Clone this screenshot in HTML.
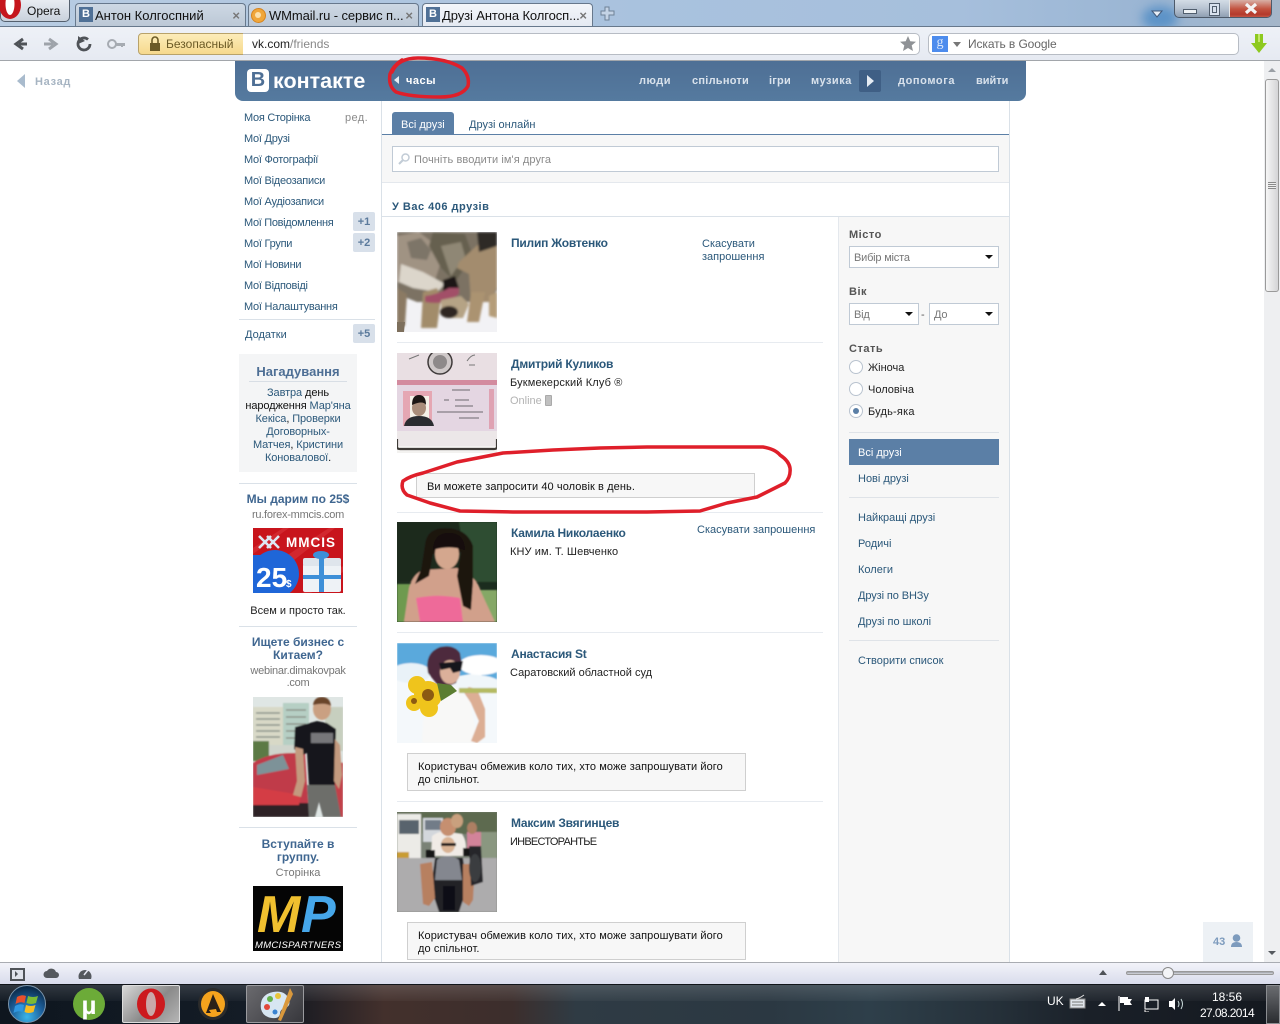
<!DOCTYPE html>
<html lang="uk"><head><meta charset="utf-8"><title>Друзі Антона Колгоспного</title>
<style>
html,body{margin:0;padding:0;width:1280px;height:1024px;overflow:hidden;background:#fff}
body{position:relative;font-family:"Liberation Sans","DejaVu Sans",sans-serif;font-size:11px;color:#000}
.t{position:absolute;white-space:nowrap;line-height:14px;margin-top:1px}
.b{position:absolute}
.l{color:#2b587a}
.m{letter-spacing:-.25px}
.bd{font-weight:bold}
.c{text-align:center}
.ad{color:#777;letter-spacing:-.25px}
.n{font-weight:bold;color:#2b587a;font-size:12px;margin-top:0;letter-spacing:-.22px}
.nav{font-weight:bold;color:#d9e2ec;font-size:11px;top:73px;letter-spacing:.5px}
.badge{position:absolute;left:353px;width:22px;height:19px;background:#d8e0ea;border-radius:2px;color:#5b7a9c;font-weight:bold;text-align:center;line-height:20px;font-size:11px}
.sep{position:absolute;height:1px;background:#e7ebf0}
.msg{position:absolute;background:#f7f7f7;border:1px solid #cfcfcf;box-sizing:border-box;padding:7px 10px 0;line-height:13px;color:#111;letter-spacing:.09px}
.tab{position:absolute;top:3px;height:23px;width:171px;border-radius:4px 4px 0 0;border:1px solid #67788c;border-bottom:0;box-sizing:border-box;font-size:13px;line-height:23px;color:#111;white-space:nowrap;overflow:hidden}
.vk{position:absolute;left:3px;top:3px;width:14px;height:15px;background:#4f7096;color:#fff;font-weight:bold;font-size:11px;text-align:center;line-height:15px}
.x{position:absolute;right:5px;top:0;color:#777;font-size:13px;font-weight:bold;background:inherit}
.sel{position:absolute;background:#fff;border:1px solid #c0cad5;box-sizing:border-box;height:22px;color:#777;line-height:23px;padding-left:4px;letter-spacing:-.2px}
.sel i{position:absolute;right:5px;top:8px;width:0;height:0;border:4px solid transparent;border-top:4px solid #111;border-bottom:0}
.rad{position:absolute;left:849px;width:12px;height:12px;border:1px solid #b9c3cf;border-radius:50%;background:#fff}
.h{letter-spacing:.5px}
</style></head><body>

<!-- title/tab bar -->
<div class="b" style="left:0;top:0;width:1280px;height:27px;background:linear-gradient(90deg,#b8cce2 0,#a9c2de 50%,#a6bfdc 75%,#9ab5d3 90%,#a5b6c9 100%)"></div>
<div class="b" style="left:1142px;top:6px;width:36px;height:24px;background:#5d93c7;border-radius:50%;filter:blur(5px)"></div>
<div class="b" style="left:0;top:26px;width:1280px;height:1px;background:#67788c"></div>
<div class="b" style="left:0;top:0;width:70px;height:22px;background:linear-gradient(#e8ecf2,#c9d1dc);border:1px solid #55606e;border-top:0;border-radius:0 0 5px 5px;box-sizing:border-box"></div>
<svg class="b" style="left:0;top:0" width="24" height="21"><ellipse cx="10" cy="5" rx="11" ry="14" fill="#c5161d"/><ellipse cx="10" cy="4" rx="4.5" ry="11" fill="#fff"/></svg>
<div class="t" style="left:27px;top:3px;font-size:12px;color:#111">Opera</div>
<div class="tab" style="left:75px;background:linear-gradient(#cdd8e4,#bcc8d6)"><span class="vk">В</span><span style="margin-left:19px">Антон Колгоспний</span><span class="x">×</span></div>
<div class="tab" style="left:248px;background:linear-gradient(#cdd8e4,#bcc8d6)"><svg class="b" style="left:2px;top:4px" width="15" height="15"><circle cx="7.5" cy="7.5" r="7" fill="#f0a63a" stroke="#d5831e"/><circle cx="7" cy="7" r="3" fill="#fbe0ac"/></svg><span style="margin-left:20px;letter-spacing:-.1px">WMmail.ru - сервис п...</span><span class="x">×</span></div>
<div class="tab" style="left:422px;background:linear-gradient(#f3f6fa,#e4e9f2)"><span class="vk">В</span><span style="margin-left:19px;letter-spacing:-.1px">Друзі Антона Колгосп...</span><span class="x">×</span></div>
<svg class="b" style="left:600px;top:6px" width="15" height="15"><path d="M5 1h4v4h5v4H9v5H5V9H1V5h4z" fill="#c4d3e5" stroke="#6f8297"/></svg>
<svg class="b" style="left:1150px;top:9px" width="14" height="10"><path d="M2 2h10L7 8z" fill="#e7eef6" stroke="#41597a"/></svg>
<!-- window controls -->
<div class="b" style="left:1174px;top:0;width:98px;height:18px;border:1px solid #4d5a6a;border-top:0;border-radius:0 0 5px 5px;box-sizing:border-box;background:linear-gradient(#d3dce6,#b4c0cf 55%,#8f9fb2);overflow:hidden">
<div class="b" style="left:54px;top:0;width:44px;height:18px;background:linear-gradient(#d8b0a6,#c2523f 50%,#b43a2c 80%,#c9604e);border-left:1px solid #e6e6e6;box-sizing:border-box"></div></div>
<div class="b" style="left:1183px;top:9px;width:12px;height:3px;background:#eef2f6;border:1px solid #505e6e"></div>
<div class="b" style="left:1209px;top:3px;width:9px;height:11px;background:#d8e2ee;border:1px solid #505e6e"></div>
<div class="b" style="left:1212px;top:6px;width:3px;height:5px;border:1px solid #505e6e"></div>
<div class="b" style="left:1251px;top:0;width:0;height:0"></div>
<svg class="b" style="left:1244px;top:3px" width="14" height="11"><path d="M2 1l10 9M12 1L2 10" stroke="#f4f4f4" stroke-width="3.200"/></svg>

<!-- toolbar -->
<div class="b" style="left:0;top:27px;width:1280px;height:33px;background:linear-gradient(#eef1f7,#e6eaf2)"></div>
<div class="b" style="left:0;top:60px;width:1280px;height:1px;background:#a2a6ab"></div>
<svg class="b" style="left:12px;top:35px" width="120" height="18">
<path d="M15 9H7M11 4L4 9l7 5" fill="none" stroke="#4f5358" stroke-width="3"/>
<path d="M32 9h9M37 4l7 5-7 5" fill="none" stroke="#9ea3aa" stroke-width="3"/>
<path d="M76 4.500A6 6 0 1 0 78 9" fill="none" stroke="#4f5358" stroke-width="2.800"/><path d="M66 1v8l7-3z" fill="#4f5358"/>
<circle cx="100" cy="9" r="4" fill="none" stroke="#a6abb2" stroke-width="2"/><path d="M104 8h9v3h-2v1h-2v-1h-5z" fill="#a6abb2"/>
</svg>
<div class="b" style="left:138px;top:33px;width:106px;height:22px;background:linear-gradient(#fcecb9,#f6d98d);border:1px solid #b8a26a;border-radius:4px 0 0 4px;box-sizing:border-box"></div>
<svg class="b" style="left:148px;top:36px" width="14" height="16"><rect x="2" y="7" width="10" height="8" fill="#6b5a26"/><path d="M4 7V4a3 3 0 0 1 6 0v3" fill="none" stroke="#6b5a26" stroke-width="1.6"/></svg>
<div class="t" style="left:166px;top:36px;font-size:12px;color:#6b5a26">Безопасный</div>
<div class="b" style="left:243px;top:33px;width:677px;height:22px;background:#fff;border:1px solid #b7bcc4;border-left:0;border-radius:0 5px 5px 0;box-sizing:border-box"></div>
<div class="t" style="left:252px;top:36px;font-size:12px;color:#222">vk.com<span style="color:#888">/friends</span></div>
<svg class="b" style="left:900px;top:36px" width="16" height="15"><path d="M8 0l2.3 5.2 5.7.5-4.3 3.7 1.3 5.6L8 12l-5 3 1.3-5.6L0 5.7l5.700-.5z" fill="#8f9296"/></svg>
<div class="b" style="left:928px;top:33px;width:311px;height:22px;background:#fff;border:1px solid #b7bcc4;border-radius:5px;box-sizing:border-box"></div>
<div class="b" style="left:932px;top:36px;width:16px;height:16px;background:#4d8ced;color:#dbe8fb;font:14px/14px 'Liberation Serif',serif;text-align:center">g</div>
<div class="b" style="left:953px;top:42px;width:0;height:0;border:4px solid transparent;border-top:5px solid #777;border-bottom:0"></div>
<div class="t" style="left:968px;top:36px;font-size:12px;color:#666;letter-spacing:-.1px">Искать в Google</div>
<svg class="b" style="left:1250px;top:33px" width="18" height="21"><path d="M5 1h8v9h4L9 20 1 10h4z" fill="#8dc91f"/><path d="M8 1h2v8H8z" fill="#c3e76a"/></svg>

<!-- VK page -->
<div class="b" style="left:235px;top:61px;width:791px;height:40px;background:linear-gradient(#4e6f95,#557a9f);border-radius:0 0 8px 8px"></div>
<div class="b" style="left:247px;top:69px;width:22px;height:23px;background:#fff;border-radius:4px;color:#4e6f95;font-weight:bold;font-size:20px;line-height:23px;text-align:center">В</div>
<div class="t" style="left:273px;top:70px;color:#fff;font-weight:bold;font-size:21.500px;line-height:20px">контакте</div>
<div class="b" style="left:394px;top:76px;width:0;height:0;border:4px solid transparent;border-right:5px solid #e6ecf3;border-left:0"></div>
<div class="t nav" style="left:406px;color:#fff">часы</div>
<div class="t nav" style="left:639px">люди</div>
<div class="t nav" style="left:692px;letter-spacing:.25px">спільноти</div>
<div class="t nav" style="left:769px;letter-spacing:.2px">ігри</div>
<div class="t nav" style="left:811px">музика</div>
<div class="b" style="left:859px;top:70px;width:22px;height:22px;background:#3f5f85;border-radius:2px"></div>
<div class="b" style="left:867px;top:75px;width:0;height:0;border:6px solid transparent;border-left:7px solid #e6ecf3;border-right:0"></div>
<div class="t nav" style="left:898px;letter-spacing:.6px">допомога</div>
<div class="t nav" style="left:976px;letter-spacing:0">вийти</div>

<!-- back -->
<div class="b" style="left:17px;top:74px;width:0;height:0;border:7px solid transparent;border-right:8px solid #a9bbcd;border-left:0"></div>
<div class="t bd" style="left:35px;top:74px;color:#a6b4c2;letter-spacing:.7px">Назад</div>

<!-- structural columns -->
<div class="b" style="left:381px;top:101px;width:1px;height:862px;background:#dae1e8"></div>
<div class="b" style="left:838px;top:217px;width:171px;height:746px;background:#f7f7f7;border-left:1px solid #e4e8ed;box-sizing:border-box"></div>
<div class="b" style="left:1009px;top:101px;width:1px;height:862px;background:#dae1e8"></div>

<!-- left menu -->
<div class="t l m" style="left:244px;top:110px">Моя Сторінка</div><div class="t" style="left:345px;top:110px;color:#8a8a8a;letter-spacing:.4px">ред.</div>
<div class="t l m" style="left:244px;top:131px">Мої Друзі</div>
<div class="t l m" style="left:244px;top:152px">Мої Фотографії</div>
<div class="t l m" style="left:244px;top:173px">Мої Відеозаписи</div>
<div class="t l m" style="left:244px;top:194px">Мої Аудіозаписи</div>
<div class="t l m" style="left:244px;top:215px;letter-spacing:-.32px">Мої Повідомлення</div><div class="badge" style="top:212px">+1</div>
<div class="t l m" style="left:244px;top:236px">Мої Групи</div><div class="badge" style="top:233px">+2</div>
<div class="t l m" style="left:244px;top:257px">Мої Новини</div>
<div class="t l m" style="left:244px;top:278px">Мої Відповіді</div>
<div class="t l m" style="left:244px;top:299px">Мої Налаштування</div>
<div class="sep" style="left:239px;top:319px;width:136px;background:#dae1e8"></div>
<div class="t l" style="left:245px;top:327px">Додатки</div><div class="badge" style="top:324px">+5</div>

<!-- reminder -->
<div class="b" style="left:239px;top:354px;width:118px;height:118px;background:#f4f5f6"></div>
<div class="t bd c" style="left:239px;width:118px;top:364px;font-size:13px;color:#4e6f95">Нагадування</div>
<div class="b" style="left:249px;top:381px;width:98px;height:1px;background:#d8dee5"></div>
<div class="b c" style="left:239px;width:118px;top:387px;line-height:13px;color:#111;letter-spacing:-.1px"><span class="l">Завтра</span> день<br>народження <span class="l">Мар'яна</span><br><span class="l">Кекіса</span>, <span class="l">Проверки</span><br><span class="l">Договорных-</span><br><span class="l">Матчея</span>, <span class="l">Кристини</span><br><span class="l">Коноваловoї</span>.</div>

<!-- ads -->
<div class="sep" style="left:239px;top:483px;width:118px;background:#dae1e8"></div>
<div class="t bd c" style="left:239px;width:118px;top:491px;color:#3f6690;font-size:12px">Мы дарим по 25$</div>
<div class="t c ad" style="left:239px;width:118px;top:507px">ru.forex-mmcis.com</div>
<svg class="b" style="left:253px;top:528px" width="90" height="65">
<rect width="90" height="65" fill="#c8141c"/><path d="M0 20L30 0h6L0 26zM30 30L76 0h6L36 36zM50 65L90 38v6L58 65z" fill="#d9333a" opacity=".6"/>
<path d="M6 8l12 12M18 8L6 20M14 8l12 12M26 8L14 20" stroke="#dde7f3" stroke-width="2.600"/>
<text x="33" y="19" font-family="Liberation Sans" font-weight="bold" font-size="13.500" fill="#fff" letter-spacing="1">MMCIS</text>
<circle cx="22" cy="46" r="24" fill="#1f66d8"/><rect x="0" y="27" width="30" height="38" fill="#1f66d8"/>
<text x="3" y="59" font-family="Liberation Sans" font-weight="bold" font-size="28" fill="#fff">25</text>
<text x="33" y="59" font-family="Liberation Sans" font-weight="bold" font-size="10" fill="#fff">$</text>
<rect x="50" y="36" width="38" height="28" rx="2" fill="#eef2f6"/><rect x="50" y="30" width="38" height="8" rx="2" fill="#dfe5ec"/><rect x="66" y="30" width="5" height="34" fill="#3d8fd8"/><rect x="50" y="47" width="38" height="4" fill="#3d8fd8"/><ellipse cx="68" cy="27" rx="8" ry="4" fill="#3d8fd8"/>
</svg>
<div class="t c" style="left:239px;width:118px;top:603px;color:#222">Всем и просто так.</div>
<div class="sep" style="left:239px;top:626px;width:118px;background:#dae1e8"></div>
<div class="b bd c" style="left:239px;width:118px;top:636px;line-height:13px;color:#3f6690;font-size:12px">Ищете бизнес с<br>Китаем?</div>
<div class="b c ad" style="left:239px;width:118px;top:665px;line-height:12px">webinar.dimakovpak<br>.com</div>
<svg class="b" style="left:253px;top:697px" width="90" height="120"><defs><filter id="f1"><feGaussianBlur stdDeviation=".7"/></filter></defs>
<rect width="90" height="120" fill="#dfe6e4"/><g filter="url(#f1)"><rect x="0" y="10" width="30" height="40" fill="#d8d9c7"/><rect x="30" y="6" width="26" height="42" fill="#b6cfc4"/><rect x="72" y="10" width="18" height="44" fill="#c7cfbf"/>
<path d="M3 16h24M3 22h24M3 28h24M3 34h24M3 40h24M33 13h20M33 20h20M33 27h20M33 34h20M33 41h20" stroke="#8c938a" stroke-width="1.500"/>
<rect x="0" y="44" width="16" height="20" fill="#5b7a45"/><rect x="16" y="48" width="36" height="10" fill="#cfd4cc"/>
<path d="M0 66q14-10 40-10l12 0 4 64H0z" fill="#c03b48"/><path d="M4 68l26-10 6 14-32 6z" fill="#7d9298"/><rect x="0" y="106" width="56" height="14" fill="#2d2326"/><path d="M0 90l48 8-2 10H0z" fill="#d43c44"/>
<path d="M82 64l8 2v54H82z" fill="#c2404a"/>
<ellipse cx="69" cy="12" rx="9" ry="11" fill="#caa082"/><path d="M60 8q1-8 9-8t9 9q-6-4-18-1z" fill="#6b452c"/>
<path d="M42 30l22-6 10 2 9 6-1 32 0 26H56l-2-34-4 2-9-6z" fill="#17171a"/><path d="M58 36h22v10H58z" fill="#77777a"/>
<path d="M54 88h28l6 32H70l-4-15-4 15H56z" fill="#6d6e6b"/><path d="M42 50l8 2 2 32-4 16-8-2 4-14z" fill="#c39a7f"/><path d="M82 42l5 6 2 30-3 14-5-8z" fill="#c39a7f"/></g></svg>
<div class="sep" style="left:239px;top:827px;width:118px;background:#dae1e8"></div>
<div class="b bd c" style="left:239px;width:118px;top:838px;line-height:13px;color:#3f6690;font-size:12px">Вступайте в<br>группу.</div>
<div class="t c ad" style="left:239px;width:118px;top:865px;letter-spacing:0">Сторінка</div>
<svg class="b" style="left:253px;top:886px" width="90" height="65"><rect width="90" height="65" fill="#050505"/>
<text x="4" y="46" font-family="Liberation Sans" font-weight="bold" font-style="italic" font-size="52" fill="#f0c02f" textLength="50">M</text>
<text x="48" y="46" font-family="Liberation Sans" font-weight="bold" font-style="italic" font-size="52" fill="#46a7ea">P</text>
<text x="2" y="62" font-family="Liberation Sans" font-style="italic" font-size="9.500" fill="#fff" textLength="86">MMCISPARTNERS</text></svg>

<!-- tabs -->
<div class="b" style="left:392px;top:112px;width:62px;height:22px;background:#5b7fa6;border-radius:3px 3px 0 0"></div>
<div class="t" style="left:401px;top:117px;color:#fff">Всі друзі</div>
<div class="t l" style="left:469px;top:117px">Друзі онлайн</div>
<div class="b" style="left:382px;top:134px;width:627px;height:1px;background:#5b7fa6"></div>
<div class="b" style="left:382px;top:135px;width:627px;height:47px;background:#f7f7f7;border-bottom:1px solid #e4e8ed"></div>
<div class="b" style="left:392px;top:146px;width:607px;height:26px;background:#fff;border:1px solid #c0cad5;box-sizing:border-box"></div>
<svg class="b" style="left:398px;top:153px" width="12" height="12"><circle cx="7.500" cy="4.500" r="3.500" fill="none" stroke="#c2ccd6" stroke-width="1.500"/><path d="M5 7L1 11" stroke="#c2ccd6" stroke-width="2"/></svg>
<div class="t" style="left:414px;top:152px;color:#8a8a8a;letter-spacing:.08px">Почніть вводити ім'я друга</div>
<div class="t bd l h" style="left:392px;top:199px">У Вас 406 друзів</div>
<div class="b" style="left:382px;top:216px;width:627px;height:1px;background:#dae1e8"></div>

<!-- photo 1 wolves -->
<svg class="b" style="left:397px;top:232px" width="100" height="100"><defs><filter id="f2"><feGaussianBlur stdDeviation="1"/></filter></defs>
<rect width="100" height="100" fill="#f2f2f5"/><g filter="url(#f2)">
<path d="M0 0h100v58L92 70H20L0 62z" fill="#7b7264"/>
<path d="M0 4l22-4 18 14 4 16-6 18-18 6-20-4z" fill="#a09383"/>
<path d="M4 32l22 8 22 12-8 8-24-4-14-6z" fill="#dcd6cb"/>
<path d="M10 10l14-4 10 12-4 10-16-2z" fill="#7d7467"/>
<path d="M36 0l32 2 8 22-18 26-14-14-12-22z" fill="#66604f"/><path d="M44 14l20-4 4 14-14 20z" fill="#8f8775"/>
<path d="M62 30l24-22 14-4v52l-8 14-18 0-2-28-12-6z" fill="#a38c6e"/>
<path d="M80 0h20v14L82 20z" fill="#2d2a26"/>
<path d="M26 60l14-4 4 10-4 30H24z" fill="#a28c6a"/><path d="M0 56l10 6-2 32H0z" fill="#8b7a64"/>
<path d="M74 60l14 0-6 30-12 0z" fill="#ab9371"/><path d="M92 64l8-4v26l-8-2z" fill="#b59d79"/>
<path d="M46 48l12-4 4 12-16 6z" fill="#1c1815"/>
<path d="M28 64q14-2 24-8l10 0 0 6q-14 12-34 8z" fill="#a24f68"/>
<path d="M44 68l20-4 8 8-6 14-16 0-6-8z" fill="#b5a385"/>
<ellipse cx="52" cy="80" rx="9" ry="6" fill="#2f2721"/>
</g><path d="M0 90h8l-1 10H0z" fill="#7d6f5c"/></svg>
<div class="t n" style="left:511px;top:236px">Пилип Жовтенко</div>
<div class="b l" style="left:702px;top:238px;line-height:13px">Скасувати<br>запрошення</div>
<div class="sep" style="left:397px;top:342px;width:426px"></div>

<!-- photo 2 passport -->
<svg class="b" style="left:397px;top:353px" width="100" height="100"><rect width="100" height="100" fill="#e9e1e6"/>
<rect y="0" width="100" height="28" fill="#e9dfe3"/>
<circle cx="43" cy="9" r="12" fill="#cfc9c9" stroke="#3f3a3a" stroke-width="1.500"/><circle cx="43" cy="9" r="7" fill="#8e8a8a"/>
<path d="M12 6l10-4M70 8q4-6 8-6M72 12h6" stroke="#777" fill="none"/>
<rect x="0" y="27" width="100" height="5" fill="#d38b9f"/>
<rect y="32" width="100" height="46" fill="#e4d6e2"/>
<rect x="6" y="38" width="29" height="35" fill="#e5a7b3"/><rect x="13" y="43" width="19" height="29" fill="#f5f1e7"/>
<ellipse cx="22" cy="55" rx="7" ry="8" fill="#a98d7a"/><path d="M15 52q0-10 7-10t7 10q-3-5-14 0z" fill="#1c1714"/><path d="M7 73q2-10 15-10t15 10z" fill="#2a2c30"/>
<path d="M55 37h18M47 47h5M58 47h14M58 53h18M40 59h46M62 65h20" stroke="#6c686e" stroke-width="1"/>
<rect x="92" y="36" width="5" height="40" fill="#dfa2b3"/>
<rect y="78" width="100" height="15" fill="#ece7e8"/>
<rect x="0" y="93" width="100" height="7" fill="#f3f2f0"/><path d="M0 86v8q0 2 3 2h94q3 0 3-2v-8" fill="none" stroke="#3d3a36" stroke-width="2.200"/></svg>
<div class="t n" style="left:511px;top:357px">Дмитрий Куликов</div>
<div class="t" style="left:510px;top:375px;color:#222;letter-spacing:.15px">Букмекерский Клуб ®</div>
<div class="t" style="left:510px;top:393px;color:#b3b3b3">Online</div>
<div class="b" style="left:545px;top:395px;width:5px;height:9px;background:#c0c0c0;border:1px solid #aaa;border-radius:1px"></div>
<div class="msg" style="left:416px;top:473px;width:339px;height:25px;line-height:12px">Ви можете запросити 40 чоловік в день.</div>
<div class="sep" style="left:397px;top:512px;width:426px"></div>

<!-- photo 3 girl -->
<svg class="b" style="left:397px;top:522px" width="100" height="100"><defs><filter id="f3"><feGaussianBlur stdDeviation=".9"/></filter></defs>
<rect width="100" height="100" fill="#1b2c1e"/><g filter="url(#f3)">
<rect y="0" width="100" height="60" fill="#1b2c1e"/><path d="M62 0h38v60H72z" fill="#2f4d33"/>
<path d="M0 62h20v38H0z" fill="#6e9a50"/><path d="M76 68h24v32H82z" fill="#85a866"/>
<path d="M7 100l5-34q4-14 14-18l34-2q20 8 24 24l14 30z" fill="#d1a08b"/>
<path d="M28 22q2-16 20-16 22 0 28 18l0 36-2 28-8-4-6-30 4-24-28 2-4 22-14 8q2-6 6-14z" fill="#1a1211"/>
<ellipse cx="50" cy="32" rx="12" ry="15" fill="#d4a78e"/>
<path d="M36 28q1-17 16-17t16 17q-16-5-32 0z" fill="#151010"/>
<path d="M19 76q16-3 28-2t16 2l3 24H23z" fill="#ee6b99"/></g></svg>
<div class="t n" style="left:511px;top:526px">Камила Николаенко</div>
<div class="t l" style="left:697px;top:522px">Скасувати запрошення</div>
<div class="t" style="left:510px;top:544px;color:#222;letter-spacing:.1px">КНУ им. Т. Шевченко</div>
<div class="sep" style="left:397px;top:632px;width:426px"></div>

<!-- photo 4 -->
<svg class="b" style="left:397px;top:643px" width="100" height="100"><defs><filter id="f4"><feGaussianBlur stdDeviation=".9"/></filter></defs>
<rect width="100" height="100" fill="#f4f8fb"/><g filter="url(#f4)">
<path d="M0 0h100v40L80 30 50 35 20 24 0 34z" fill="#5aa9dc"/><ellipse cx="84" cy="22" rx="22" ry="10" fill="#fff"/><ellipse cx="14" cy="30" rx="20" ry="10" fill="#e9f2f8"/><ellipse cx="78" cy="42" rx="26" ry="10" fill="#f0f6fa"/>
<path d="M25 100l2-44 32-12 14 14 8 42z" fill="#f8f8f7"/>
<path d="M66 48l6-4 8 2 8 20 0 28-8 6-6-2 8-20-8-18z" fill="#dcae94"/>
<path d="M62 45h38v5H62z" fill="#b4ba62"/>
<path d="M31 30q-4-20 12-26 14-3 20 6l2 12-6 18-14 6-6-6z" fill="#4e2c3e"/>
<ellipse cx="53" cy="29" rx="10" ry="12" fill="#dcb09a"/>
<path d="M42 20l24-2-2 10-8 2-3-5-9 2z" fill="#15151b"/></g>
<g fill="#efc41c"><circle cx="31" cy="52" r="14"/><circle cx="20" cy="42" r="9"/><circle cx="32" cy="65" r="9"/><circle cx="17" cy="60" r="8"/></g><circle cx="31" cy="52" r="6" fill="#8c5a12"/><circle cx="17" cy="58" r="3" fill="#8c5a12"/><path d="M40 40l14 2 6 6-16 10z" fill="#5b7d32"/></svg>
<div class="t n" style="left:511px;top:647px">Анастасия St</div>
<div class="t" style="left:510px;top:665px;color:#222">Саратовский областной суд</div>
<div class="msg" style="left:407px;top:753px;width:339px;height:38px">Користувач обмежив коло тих, хто може запрошувати його<br>до спільнот.</div>
<div class="sep" style="left:397px;top:801px;width:426px"></div>

<!-- photo 5 -->
<svg class="b" style="left:397px;top:812px" width="100" height="100"><defs><filter id="f5"><feGaussianBlur stdDeviation=".7"/></filter></defs>
<rect width="100" height="100" fill="#7a8276"/><g filter="url(#f5)">
<rect y="0" width="100" height="22" fill="#5d6a50"/><rect y="46" width="100" height="54" fill="#adacad"/><rect x="82" y="20" width="18" height="26" fill="#8a9780"/>
<rect x="0" y="2" width="24" height="44" fill="#ecebe7"/><rect x="2" y="8" width="20" height="14" fill="#59646d"/><rect x="0" y="40" width="12" height="6" fill="#c99c31"/>
<rect x="26" y="6" width="20" height="24" fill="#d3d7dc"/><rect x="28" y="8" width="16" height="10" fill="#727c88"/>
<path d="M35 24q8-6 16-4l14 2q6 8 3 22H34z" fill="#f0ebe6"/>
<ellipse cx="51" cy="15" rx="8" ry="9" fill="#c68f70"/><ellipse cx="60" cy="9" rx="6" ry="7" fill="#c9a07e"/><ellipse cx="51" cy="33" rx="7" ry="8" fill="#d9b394"/><rect x="44" y="31" width="15" height="3" fill="#171717"/>
<path d="M38 46l28 0 4 30-8 24-20 0-8-24z" fill="#232327"/><path d="M40 48q10-8 22 0l3 20H38z" fill="#84878f"/><path d="M46 74h12v24H46z" fill="#101012"/><rect x="29" y="38" width="9" height="8" fill="#121212"/><rect x="66" y="36" width="9" height="8" fill="#121212"/>
<path d="M23 52l12-2 3 36-6 8-6-2z" fill="#b78060"/><path d="M66 52l12 0-2 36-4 6-6-4z" fill="#b78060"/>
<rect x="70" y="20" width="14" height="16" fill="#d2839a"/><ellipse cx="75" cy="16" rx="5" ry="6" fill="#ad7f64"/><path d="M72 34h12l2 36-12 4z" fill="#26262a"/><ellipse cx="78" cy="56" rx="6" ry="14" fill="#3b3c40"/></g></svg>
<div class="t n" style="left:511px;top:816px">Максим Звягинцев</div>
<div class="t" style="left:510px;top:834px;color:#222;letter-spacing:-.75px">ИНВЕСТОРАНТЬЕ</div>
<div class="msg" style="left:407px;top:922px;width:339px;height:38px">Користувач обмежив коло тих, хто може запрошувати його<br>до спільнот.</div>

<!-- filters -->
<div class="t bd h" style="left:849px;top:227px;color:#555">Місто</div>
<div class="sel" style="left:849px;top:246px;width:150px">Вибір міста<i></i></div>
<div class="t bd h" style="left:849px;top:284px;color:#555">Вік</div>
<div class="sel" style="left:849px;top:303px;width:70px">Від<i></i></div>
<div class="t" style="left:921px;top:307px;color:#555">-</div>
<div class="sel" style="left:929px;top:303px;width:70px">До<i></i></div>
<div class="t bd h" style="left:849px;top:341px;color:#555">Стать</div>
<div class="rad" style="top:360px"></div><div class="t" style="left:868px;top:360px;color:#222">Жіноча</div>
<div class="rad" style="top:382px"></div><div class="t" style="left:868px;top:382px;color:#222">Чоловіча</div>
<div class="rad" style="top:404px"></div><div class="b" style="left:853px;top:408px;width:6px;height:6px;border-radius:50%;background:#5b7fa6"></div><div class="t" style="left:868px;top:404px;color:#222;letter-spacing:.2px">Будь-яка</div>
<div class="sep" style="left:849px;top:432px;width:150px;background:#dfe3e8"></div>
<div class="b" style="left:849px;top:439px;width:150px;height:26px;background:#5b7fa6"></div>
<div class="t" style="left:858px;top:445px;color:#fff">Всі друзі</div>
<div class="t l" style="left:858px;top:471px">Нові друзі</div>
<div class="sep" style="left:849px;top:497px;width:150px;background:#dfe3e8"></div>
<div class="t l" style="left:858px;top:510px">Найкращі друзі</div>
<div class="t l" style="left:858px;top:536px">Родичі</div>
<div class="t l" style="left:858px;top:562px">Колеги</div>
<div class="t l" style="left:858px;top:588px;letter-spacing:-.1px">Друзі по ВНЗу</div>
<div class="t l" style="left:858px;top:614px">Друзі по школі</div>
<div class="sep" style="left:849px;top:640px;width:150px;background:#dfe3e8"></div>
<div class="t l" style="left:858px;top:653px">Створити список</div>

<!-- 43 -->
<div class="b" style="left:1203px;top:922px;width:50px;height:41px;background:#edf1f5"></div>
<div class="t bd" style="left:1213px;top:934px;color:#7d9bbd">43</div>
<svg class="b" style="left:1230px;top:934px" width="13" height="14"><circle cx="6.500" cy="4" r="3.800" fill="#7d9bbd"/><path d="M1 13q0-5 5.500-5T12 13z" fill="#7d9bbd"/></svg>

<!-- scrollbar -->
<div class="b" style="left:1264px;top:61px;width:16px;height:902px;background:#eeeff1"></div>
<div class="b" style="left:1268px;top:68px;width:0;height:0;border:4px solid transparent;border-bottom:4px solid #9a9fa5;border-top:0"></div>
<div class="b" style="left:1265px;top:79px;width:14px;height:213px;background:linear-gradient(90deg,#f6f6f6,#d4d4d6);border:1px solid #9a9a9a;border-radius:3px;box-sizing:border-box"></div>
<div class="b" style="left:1268px;top:182px;width:8px;height:7px;background:repeating-linear-gradient(#8a8a8a 0,#8a8a8a 1px,#eee 1px,#eee 2px)"></div>
<div class="b" style="left:1268px;top:951px;width:0;height:0;border:4px solid transparent;border-top:4px solid #55595e;border-bottom:0"></div>

<!-- status bar -->
<div class="b" style="left:0;top:962px;width:1280px;height:1px;background:#a9acb2"></div>
<div class="b" style="left:0;top:963px;width:1280px;height:21px;background:linear-gradient(#f2f3f9,#d9dcec)"></div>
<div class="b" style="left:10px;top:968px;width:11px;height:9px;border:2px solid #4f5358;background:#dfe2ea"></div>
<div class="b" style="left:15px;top:971px;width:0;height:0;border:3px solid transparent;border-left:3px solid #4f5358;border-right:0"></div>
<svg class="b" style="left:43px;top:966px" width="17" height="14"><path d="M4 12a3.500 3.500 0 0 1 0-7 5 5 0 0 1 9 1 3 3 0 0 1 0 6z" fill="#55595e"/></svg>
<svg class="b" style="left:77px;top:966px" width="16" height="14"><path d="M2 13a6.500 6.500 0 1 1 12 0z" fill="#55595e"/><path d="M7 9l4-5" stroke="#e6e8f2" stroke-width="1.500"/></svg>
<div class="b" style="left:1099px;top:970px;width:0;height:0;border:4px solid transparent;border-bottom:5px solid #4f5358;border-top:0"></div>
<div class="b" style="left:1126px;top:971px;width:148px;height:4px;background:linear-gradient(#9a9da5,#d8dade);border-radius:2px;border:1px solid #999;box-sizing:border-box"></div>
<div class="b" style="left:1162px;top:967px;width:10px;height:10px;border-radius:50%;background:#f3f4f7;border:1px solid #888"></div>

<!-- taskbar -->
<div class="b" style="left:0;top:984px;width:1280px;height:40px;background:linear-gradient(90deg,#0e161f 0,#141c26 20%,#1f1e24 24%,#43302c 30%,#3c2e2c 40%,#2f3b44 45%,#2b3842 60%,#2e3f4a 68%,#253039 78%,#1a2028 85%,#14181f 100%)"></div>
<div class="b" style="left:0;top:984px;width:1280px;height:1px;background:#11151a"></div>
<div class="b" style="left:0;top:985px;width:1280px;height:16px;background:linear-gradient(rgba(255,255,255,.14),rgba(255,255,255,.03))"></div>
<svg class="b" style="left:7px;top:984px" width="40" height="40"><defs><radialGradient id="o" cx=".5" cy=".85" r=".8"><stop offset="0" stop-color="#3cb6ea"/><stop offset=".55" stop-color="#1c5e9a"/><stop offset="1" stop-color="#0b2a48"/></radialGradient></defs>
<circle cx="20" cy="20" r="18.500" fill="url(#o)" stroke="#7b95ac"/>
<path d="M10 13q5-3 9-1l-1.500 7q-4-2-9 1z" fill="#e8502c"/><path d="M21 12q5 2 10 0l-2 7q-5 2-9.500 0z" fill="#7cba34"/><path d="M8 22q5-3 9-1l-1.500 7q-4-2-9 1z" fill="#2f97e0"/><path d="M19 21q5 2 9.500 0l-2 7q-5 2-9 0z" fill="#f7bd22"/></svg>
<svg class="b" style="left:72px;top:986px" width="34" height="36"><circle cx="17" cy="18" r="16" fill="#6cab38"/><text x="17" y="28" text-anchor="middle" font-family="Liberation Sans" font-weight="bold" font-size="26" fill="#fff">µ</text></svg>
<div class="b" style="left:122px;top:985px;width:58px;height:38px;background:linear-gradient(135deg,#d8d8d8,#8a8a8a 55%,#b5b5b5);border:1px solid #ddd;border-radius:2px;box-sizing:border-box"></div>
<svg class="b" style="left:136px;top:986px" width="30" height="36"><ellipse cx="15" cy="18" rx="14" ry="15.500" fill="#cc1a1e"/><ellipse cx="15" cy="18" rx="5" ry="12" fill="#c9a8a8"/></svg>
<svg class="b" style="left:197px;top:987px" width="32" height="34"><ellipse cx="16" cy="17" rx="15" ry="16" fill="#2b2b2b"/><ellipse cx="16" cy="17" rx="12" ry="13" fill="#f5a31d"/><path d="M16 7l8 18h-4l-1-3-7 1 2 3H9z" fill="#2b2118"/></svg>
<div class="b" style="left:246px;top:985px;width:58px;height:38px;background:linear-gradient(135deg,#6a6a6e,#37373c);border:1px solid #9a9a9e;border-radius:2px;box-sizing:border-box"></div>
<svg class="b" style="left:258px;top:987px" width="36" height="35"><path d="M3 22q-2-14 12-17 13-2 16 8 2 6-4 8-5 1-5 6-1 5-8 4-9-1-11-9z" fill="#d7e6f2"/><circle cx="9" cy="20" r="3" fill="#e2483a"/><circle cx="12" cy="12" r="3" fill="#64b14a"/><circle cx="20" cy="9" r="3" fill="#e8c53a"/><circle cx="17" cy="25" r="2.500" fill="#3a83d0"/><path d="M32 1l3 6-12 27-3-1z" fill="#d9983c"/></svg>
<div class="t" style="left:1047px;top:993px;color:#fff;font-size:12px">UK</div>
<svg class="b" style="left:1069px;top:994px" width="17" height="15"><rect x="1" y="5" width="15" height="9" fill="#dfe4ea" stroke="#888"/><path d="M3 8h11M3 11h11" stroke="#777"/><path d="M7 5q4-1 8-4" stroke="#ddd" fill="none"/></svg>
<div class="b" style="left:1098px;top:1002px;width:0;height:0;border:4px solid transparent;border-bottom:4px solid #fff;border-top:0"></div>
<svg class="b" style="left:1118px;top:996px" width="68" height="16"><path d="M1 0v15" stroke="#fff"/><path d="M2 1h8v2h4l-2 3 2 3H6V7H2z" fill="#fff"/><rect x="27" y="4" width="13" height="9" fill="#1a2028" stroke="#fff"/><rect x="27" y="1" width="4" height="5" fill="#fff"/><path d="M27 14v2h4" stroke="#fff"/><path d="M51 5h3l3-3v12l-3-3h-3z" fill="#fff"/><path d="M60 5q2 3 0 6M63 3q3 5 0 10" stroke="#cdd" fill="none"/></svg>
<div class="t c" style="left:1190px;width:74px;top:989px;color:#fff;font-size:12px">18:56</div>
<div class="t c" style="left:1190px;width:74px;top:1005px;color:#fff;font-size:12px;letter-spacing:-.6px">27.08.2014</div>
<div class="b" style="left:1266px;top:985px;width:14px;height:39px;background:linear-gradient(#6a6c70,#2a2c30);border:1px solid #8a8c90;box-sizing:border-box"></div>

<!-- red annotations -->
<svg class="b" style="left:0;top:0;pointer-events:none" width="1280" height="1024"><g fill="none" stroke="#df1f2a" stroke-width="3.500" stroke-linejoin="round" stroke-linecap="round">
<path d="M392 72Q398 58 418 58Q446 58 462 68Q470 76 468 86Q462 97 440 97Q410 97 396 92Q388 86 390 74Q393 66 402 60"/>
<path d="M403 481Q410 476 423 473L457 462L503 453L553 450L600 448L647 447L713 447L763 447Q775 449 780 455Q789 461 790 468Q791 477 785 483L757 497L727 503L700 511L647 512L580 512L513 512L460 511L430 503L407 495Q400 489 403 481"/></g></svg>
</body></html>
